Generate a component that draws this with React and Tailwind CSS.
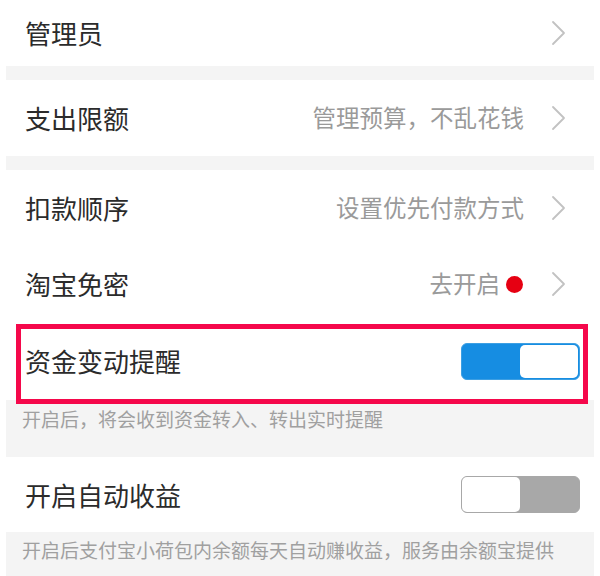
import React from 'react'

const font = { fontFamily: '"Noto Sans CJK SC", "Noto Sans", sans-serif' }

function Chevron() {
  return (
    <svg width="18" height="28" viewBox="0 0 18 28" className="shrink-0">
      <polyline points="4,3 15,14 4,25" fill="none" stroke="#c2c2c2" strokeWidth="1.8" strokeLinejoin="round" strokeLinecap="round" />
    </svg>
  )
}

function Row({ title, hint, dot, h }) {
  return (
    <div className={`flex items-center bg-white pl-[19px] pr-[27px] ${h}`}>
      <span className="text-[26px] text-[#2b2b2b] leading-none">{title}</span>
      <div className="ml-auto flex items-center">
        {hint && <span className="text-[23.5px] text-[#9a9a9a] leading-none">{hint}</span>}
        {dot && <span className="ml-[6px] w-[17px] h-[17px] rounded-full bg-[#e60012]"></span>}
        <span className={hint ? (dot ? 'ml-[26px]' : 'ml-[25px]') : ''}><Chevron /></span>
      </div>
    </div>
  )
}

function Toggle({ on }) {
  if (on) {
    return (
      <div className="flex w-[119px] h-[37px] rounded-[6px] bg-[#168de2] border-[1.5px] border-[#3d9fe3] p-[1px] pl-0">
        <div className="ml-auto w-[58px] h-full bg-white rounded-[5px]"></div>
      </div>
    )
  }
  return (
    <div className="flex w-[119px] h-[37px] rounded-[6px] bg-[#a8a8a8] border-[1.5px] border-[#a8a8a8]">
      <div className="w-[58px] h-full bg-white rounded-[5px]"></div>
    </div>
  )
}

export default function App() {
  return (
    <div className="w-[600px] h-[576px] overflow-hidden bg-white px-[6px]" style={font}>
      <div className="flex flex-col bg-[#f4f4f4]">
        <Row title="管理员" h="h-[66px]" />
        <div className="h-[14px]"></div>
        <Row title="支出限额" hint="管理预算，不乱花钱" h="h-[76px]" />
        <div className="h-[14px]"></div>
        <Row title="扣款顺序" hint="设置优先付款方式" h="h-[76px]" />
        <Row title="淘宝免密" hint="去开启" dot h="h-[76px]" />

        <div className="relative flex items-center bg-white h-[78px] pl-[19px] pr-[14px]">
          <span className="text-[26px] text-[#2b2b2b] leading-none">资金变动提醒</span>
          <div className="ml-auto"><Toggle on /></div>
          <div className="absolute left-[10px] right-[6px] top-[2px] h-[80px] border-[5px] border-[#f5084b] z-10"></div>
        </div>
        <div className="h-[57px] pl-[16px] pt-[8px]">
          <span className="text-[19px] text-[#a0a0a0] leading-none">开启后，将会收到资金转入、转出实时提醒</span>
        </div>

        <div className="flex items-center bg-white h-[75px] pl-[19px] pr-[14px]">
          <span className="text-[26px] text-[#2b2b2b] leading-none">开启自动收益</span>
          <div className="ml-auto"><Toggle /></div>
        </div>
        <div className="h-[44px] pl-[16px] pt-[7px]">
          <span className="text-[19px] text-[#a0a0a0] leading-none whitespace-nowrap">开启后支付宝小荷包内余额每天自动赚收益，服务由余额宝提供</span>
        </div>
      </div>
    </div>
  )
}
